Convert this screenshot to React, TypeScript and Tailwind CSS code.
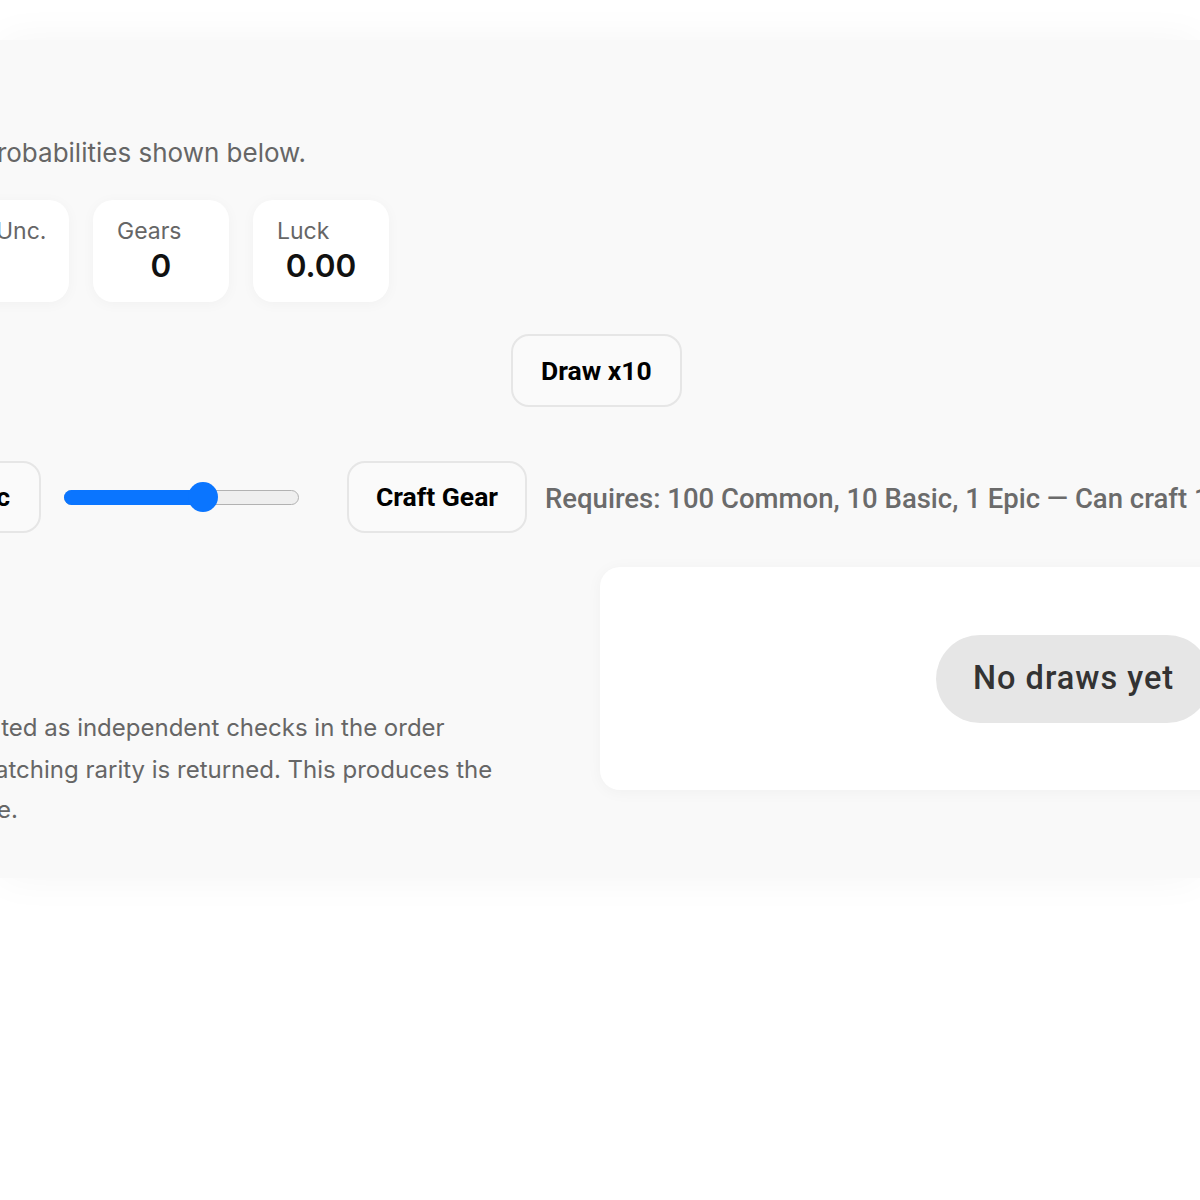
import React from 'react';

type Stat = { label: string; value: string; labelPad?: string; offset?: string };

const STATS: Stat[] = [
  { label: 'Unc.', value: '', labelPad: 'pl-[63px]', offset: '-ml-[67px]' },
  { label: 'Gears', value: '0' },
  { label: 'Luck', value: '0.00' },
];

const SLIDER_VALUE = 0.6;

function StatCard({ stat }: { stat: Stat }) {
  return (
    <div
      className={`${stat.offset ?? ''} w-[136px] shrink-0 h-[102px] rounded-[20px] bg-white pt-[16px] shadow-[0_2px_14px_rgba(0,0,0,0.035)]`}
    >
      <div className={`${stat.labelPad ?? 'pl-6'} text-[23px] leading-[30px] text-[#666] whitespace-nowrap`}>
        {stat.label}
      </div>
      <div className="mt-[2px] h-[36px] text-center text-[31.5px] leading-[36px] font-semibold text-[#111]">
        {stat.value}
      </div>
    </div>
  );
}

function RangeSlider({ value }: { value: number }) {
  // thumb travels between the two rounded ends of the track
  const thumb = 15 + value * 205;
  return (
    <div className="relative h-[15px] w-[235px] shrink-0 rounded-full border border-[#b2b2b2] bg-[#efefef]">
      <div
        className="absolute -left-px -top-px h-[15px] rounded-l-full bg-[#0a75ff]"
        style={{ width: thumb + 1 }}
      />
      <div
        className="absolute top-1/2 h-[30px] w-[30px] -translate-x-1/2 -translate-y-1/2 rounded-full bg-[#0a75ff]"
        style={{ left: thumb }}
      />
    </div>
  );
}

export default function App() {
  return (
    <div className="h-[1200px] w-[1200px] overflow-hidden bg-white font-['Inter',sans-serif]">
      <div className="mt-[40px] h-[838px] bg-[#f9f9f9] pt-[95px] shadow-[0_0_40px_rgba(0,0,0,0.045)]">
        {/* intro line */}
        <p className="-ml-[19px] whitespace-nowrap text-[26px] leading-[36px] text-[#666]">
          probabilities shown below.
        </p>

        {/* counters */}
        <div className="mt-[29px] flex gap-6">
          {STATS.map((s) => (
            <StatCard key={s.label} stat={s} />
          ))}
        </div>

        {/* draw */}
        <div className="mt-[32px] flex pl-[511px] font-['Roboto',sans-serif]">
          <button className="h-[73px] rounded-[18px] border-2 border-[#e6e6e6] bg-[#fafafa] px-[28px] text-[26.5px] font-bold text-black">
            Draw x10
          </button>
        </div>

        {/* crafting */}
        <div className="mt-[54px] flex items-center font-['Roboto',sans-serif]">
          <button className="-ml-[159px] flex h-[72px] w-[200px] shrink-0 items-center justify-end rounded-[18px] border-2 border-[#e6e6e6] bg-[#fafafa] pr-[29px] text-[26.5px] font-bold text-black">
            Craft Epic
          </button>
          <div className="ml-[23px]">
            <RangeSlider value={SLIDER_VALUE} />
          </div>
          <button className="ml-[48px] h-[72px] w-[180px] shrink-0 rounded-[18px] border-2 border-[#e6e6e6] bg-[#fafafa] text-[26.5px] font-bold text-black">
            Craft Gear
          </button>
          <span className="ml-[18px] mt-[4px] whitespace-nowrap text-[27.5px] font-medium text-[#6b6b6b]">
            Requires: 100 Common, 10 Basic, 1 Epic — Can craft 1
          </span>
        </div>

        {/* notes + draw log */}
        <div className="mt-[34px] flex">
          <div className="w-[600px] shrink-0 pt-[141px] text-[24px] leading-[40px] text-[#666] whitespace-nowrap">
            <p className="-ml-[13px]">nted as independent checks in the order</p>
            <p className="-ml-[26px] mt-[2px]">matching rarity is returned. This produces the</p>
            <p className="-ml-[3px]">e.</p>
          </div>
          <div className="flex h-[223px] w-[960px] shrink-0 items-center rounded-[20px] bg-white pl-[336px] shadow-[0_2px_16px_rgba(0,0,0,0.04)]">
            <div className="flex h-[88px] items-center rounded-full bg-[#e6e6e6] px-[37px] font-['Roboto',sans-serif] text-[32.5px] font-medium tracking-[1px] text-[#333]">
              No draws yet
            </div>
          </div>
        </div>
      </div>
    </div>
  );
}
